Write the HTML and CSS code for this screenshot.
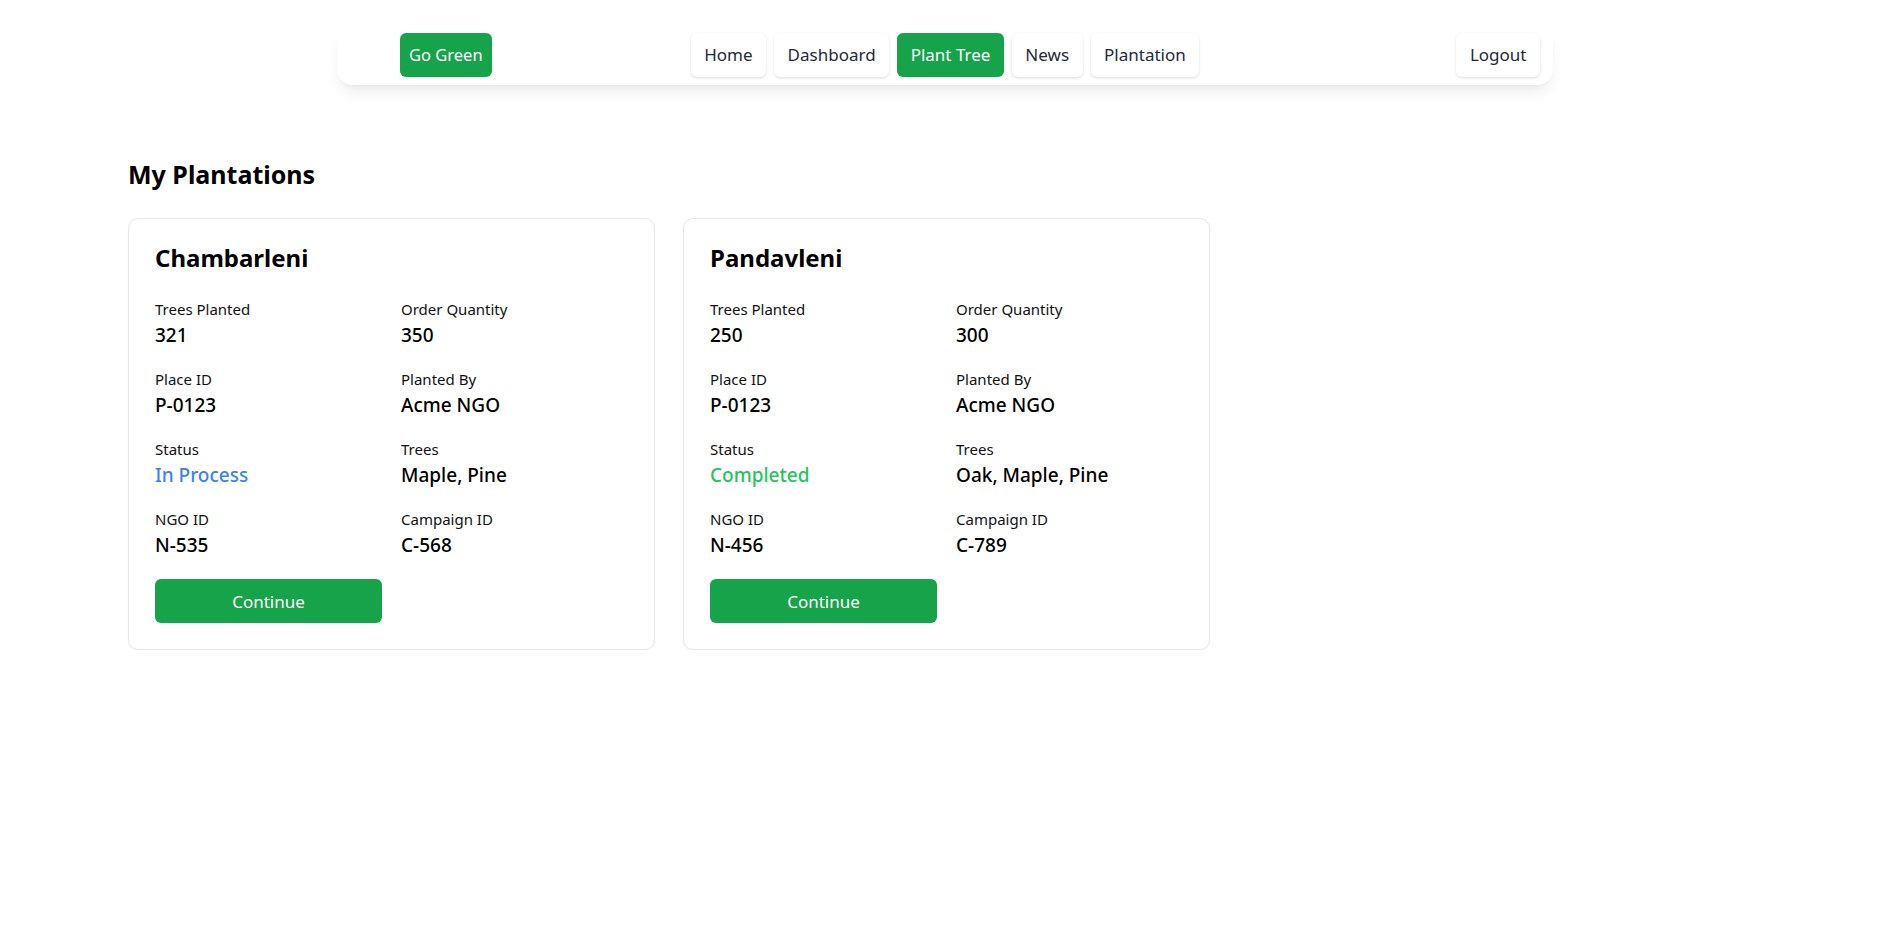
FILE: index.html
```html
<!DOCTYPE html>
<html lang="en">
<head>
<meta charset="utf-8">
<title>My Plantations</title>
<link rel="stylesheet" href="styles.css">
</head>
<body>
<header class="topbar">
  <nav class="nav">
    <div class="nav-left"><a class="btn btn-green brand" href="#">Go Green</a></div>
    <div class="nav-center">
      <a class="btn btn-light" href="#">Home</a>
      <a class="btn btn-light" href="#">Dashboard</a>
      <a class="btn btn-green" href="#">Plant Tree</a>
      <a class="btn btn-light" href="#">News</a>
      <a class="btn btn-light" href="#">Plantation</a>
    </div>
    <div class="nav-right"><a class="btn btn-light" href="#">Logout</a></div>
  </nav>
</header>
<main class="main">
  <h1 class="page-title">My Plantations</h1>
  <div class="cards">
    <section class="card">
      <h2 class="card-title">Chambarleni</h2>
      <div class="fields">
        <div class="field"><div class="label">Trees Planted</div><div class="value">321</div></div>
        <div class="field"><div class="label">Order Quantity</div><div class="value">350</div></div>
        <div class="field"><div class="label">Place ID</div><div class="value">P-0123</div></div>
        <div class="field"><div class="label">Planted By</div><div class="value">Acme NGO</div></div>
        <div class="field"><div class="label">Status</div><div class="value status-process">In Process</div></div>
        <div class="field"><div class="label">Trees</div><div class="value">Maple, Pine</div></div>
        <div class="field"><div class="label">NGO ID</div><div class="value">N-535</div></div>
        <div class="field"><div class="label">Campaign ID</div><div class="value">C-568</div></div>
        <button class="continue" type="button">Continue</button>
      </div>
    </section>
    <section class="card">
      <h2 class="card-title">Pandavleni</h2>
      <div class="fields">
        <div class="field"><div class="label">Trees Planted</div><div class="value">250</div></div>
        <div class="field"><div class="label">Order Quantity</div><div class="value">300</div></div>
        <div class="field"><div class="label">Place ID</div><div class="value">P-0123</div></div>
        <div class="field"><div class="label">Planted By</div><div class="value">Acme NGO</div></div>
        <div class="field"><div class="label">Status</div><div class="value status-done">Completed</div></div>
        <div class="field"><div class="label">Trees</div><div class="value">Oak, Maple, Pine</div></div>
        <div class="field"><div class="label">NGO ID</div><div class="value">N-456</div></div>
        <div class="field"><div class="label">Campaign ID</div><div class="value">C-789</div></div>
        <button class="continue" type="button">Continue</button>
      </div>
    </section>
  </div>
</main>
</body>
</html>
```
FILE: styles.css
```css
* { box-sizing: border-box; }
html, body { margin: 0; padding: 0; background: #fff; }
body {
  font-family: "Noto Sans", "Open Sans", sans-serif;
  color: #111;
  font-size: 16px;
}
.topbar { padding-top: 25px; }
.nav {
  width: 1216px;
  margin-left: 337px;
  padding: 8px 13px;
  border-radius: 16px;
  background: #fff;
  box-shadow: 0 10px 15px -3px rgba(0,0,0,0.07), 0 4px 6px -4px rgba(0,0,0,0.07);
  display: grid;
  grid-template-columns: 1fr auto 1fr;
  align-items: center;
}
.nav-left { display: flex; padding-left: 50px; }
.nav-center { display: flex; gap: 8px; }
.nav-right { display: flex; justify-content: flex-end; }
.btn {
  display: inline-flex;
  align-items: center;
  justify-content: center;
  height: 44px;
  padding: 0 13.5px 2px;
  border-radius: 6px;
  font-size: 17px;
  text-decoration: none;
  color: #1f2937;
}
.btn-light {
  background: #fff;
  box-shadow: 0 1px 3px rgba(0,0,0,0.12), 0 1px 2px -1px rgba(0,0,0,0.08);
}
.btn-green { background: #16a34a; color: #fff; }
.brand { padding: 0 9px 2px; font-size: 16.5px; }
.main { padding: 0 128px; }
.page-title {
  margin: 73px 0 28px;
  font-size: 25px;
  line-height: 32px;
  font-weight: 700;
  color: #000;
}
.cards {
  display: grid;
  grid-template-columns: repeat(3, 527px);
  column-gap: 28px;
  align-items: start;
}
.card {
  border: 1px solid #e5e7eb;
  border-radius: 10px;
  padding: 23px 26px 26px;
  box-shadow: 0 1px 2px rgba(0,0,0,0.04);
  background: #fff;
}
.card-title {
  margin: 0 0 25px;
  font-size: 24px;
  line-height: 32px;
  font-weight: 700;
  color: #000;
}
.fields {
  display: grid;
  grid-template-columns: 1fr 1fr;
  column-gap: 19px;
  row-gap: 20px;
}
.label {
  font-size: 15px;
  line-height: 20px;
  color: #111;
}
.value {
  margin-top: 2px;
  font-size: 19px;
  line-height: 28px;
  font-weight: 500;
  color: #000;
}
.status-process { color: #3b82f6; }
.status-done { color: #22c55e; }
.continue {
  grid-column: 1;
  margin-top: 0;
  height: 44px;
  border: 0;
  border-radius: 6px;
  background: #16a34a;
  color: #fff;
  font-family: inherit;
  font-size: 17px;
  cursor: pointer;
}
```
